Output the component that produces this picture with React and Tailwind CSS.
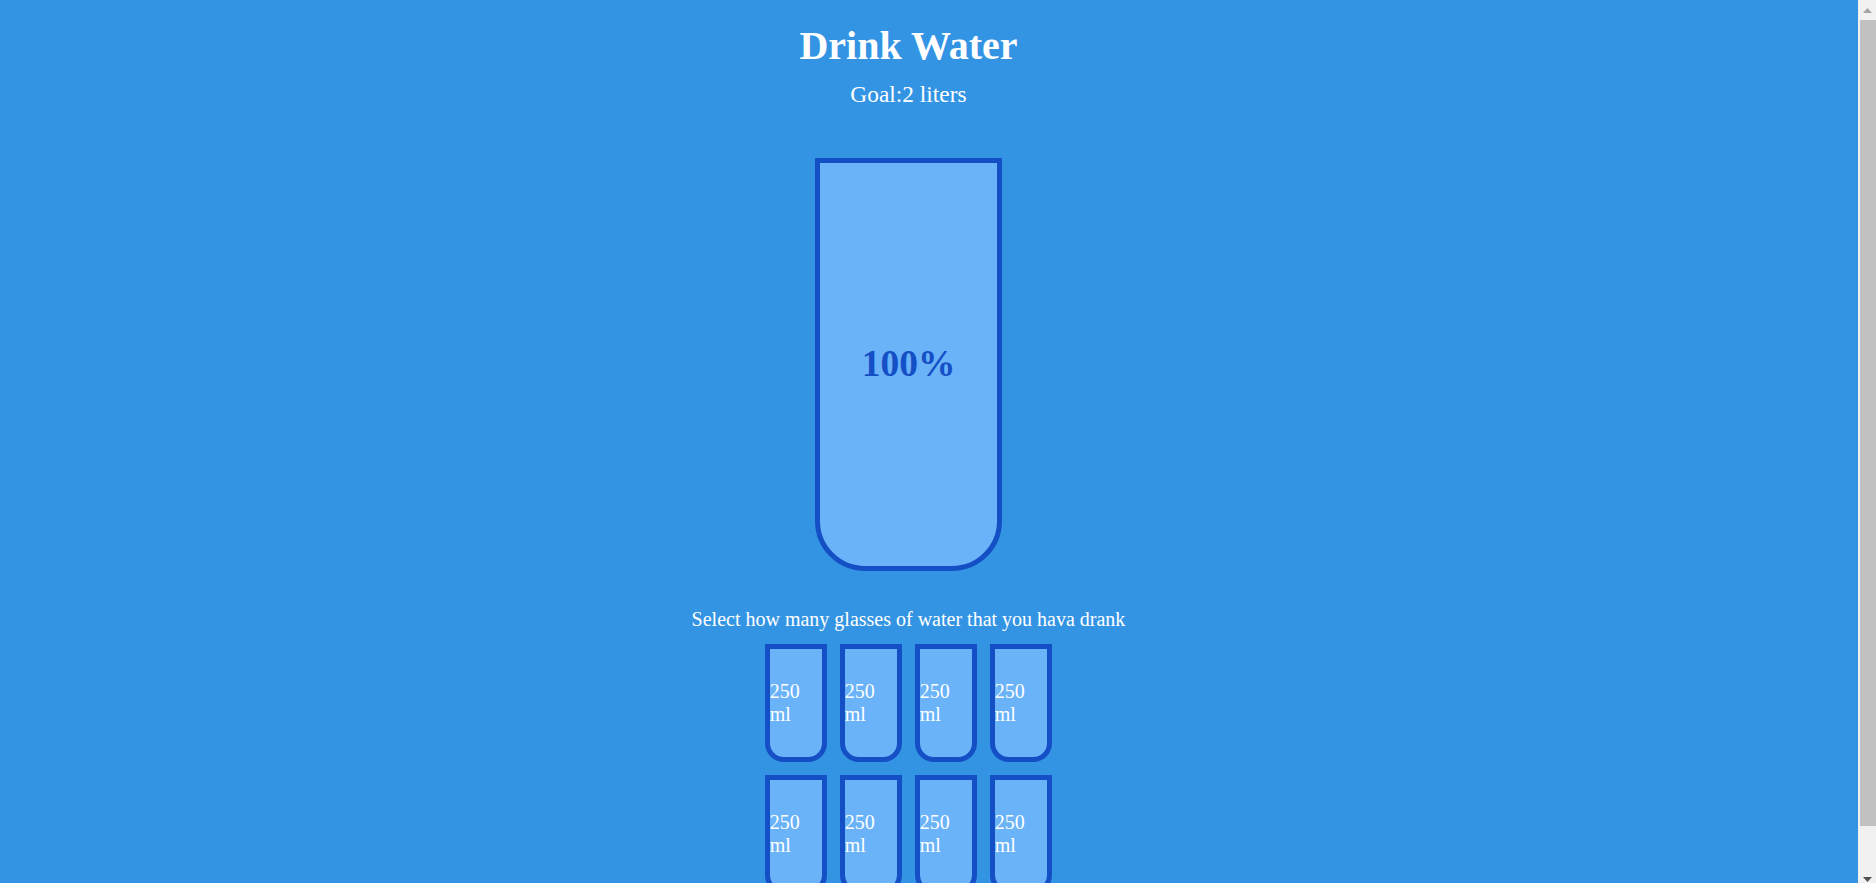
export default function App() {
  const cups = Array.from({ length: 8 });
  return (
    <div className="flex w-[1876px] h-[883px] overflow-hidden bg-[#3494e4]" style={{ fontFamily: '"Liberation Serif", "Times New Roman", serif' }}>
      <div className="w-[1858px] h-[883px] overflow-hidden">
        <div className="w-[1817px] pt-[10px] flex flex-col items-center text-white">
          <h1 className="mt-[12.5px] text-[40px] font-bold leading-[46px]">Drink Water</h1>
          <h3 className="my-[12.5px] text-[23.4px] font-normal leading-[27px]">Goal:2 liters</h3>
          <div className="my-[37.5px] w-[187.5px] h-[412.5px] border-[5px] border-[#144fc6] rounded-b-[50px] bg-[#6ab3f8] flex flex-col overflow-hidden">
            <div className="flex-1 flex items-center justify-center text-[#144fc6] font-bold text-[37.5px]">100%</div>
          </div>
          <p className="mb-[6.25px] text-[20px] leading-[23px]">Select how many glasses of water that you hava drank</p>
          <div className="w-[350px] flex flex-wrap items-center justify-center">
            {cups.map((_, i) => (
              <div
                key={i}
                className="m-[6.25px] w-[62.5px] h-[118.75px] border-[5px] border-[#144fc6] rounded-b-[18.75px] bg-[#6ab3f8] text-white text-[20px] leading-[23px] flex flex-col justify-center overflow-hidden"
              >
                <div>250 ml</div>
              </div>
            ))}
          </div>
        </div>
      </div>
      <div className="w-[18px] h-[883px] bg-[#f1f1f1] flex flex-col">
        <div className="h-[20px] flex items-center justify-center">
          <svg width="9" height="5" viewBox="0 0 9 5"><path d="M0 5 L4.5 0 L9 5 Z" fill="#a3a3a3" /></svg>
        </div>
        <div className="h-[806px] ml-[2px] bg-[#c1c1c1]" />
        <div className="flex-1 flex items-end justify-center pb-[1px]">
          <svg width="9" height="5" viewBox="0 0 9 5"><path d="M0 0 L4.5 5 L9 0 Z" fill="#505050" /></svg>
        </div>
      </div>
    </div>
  );
}
